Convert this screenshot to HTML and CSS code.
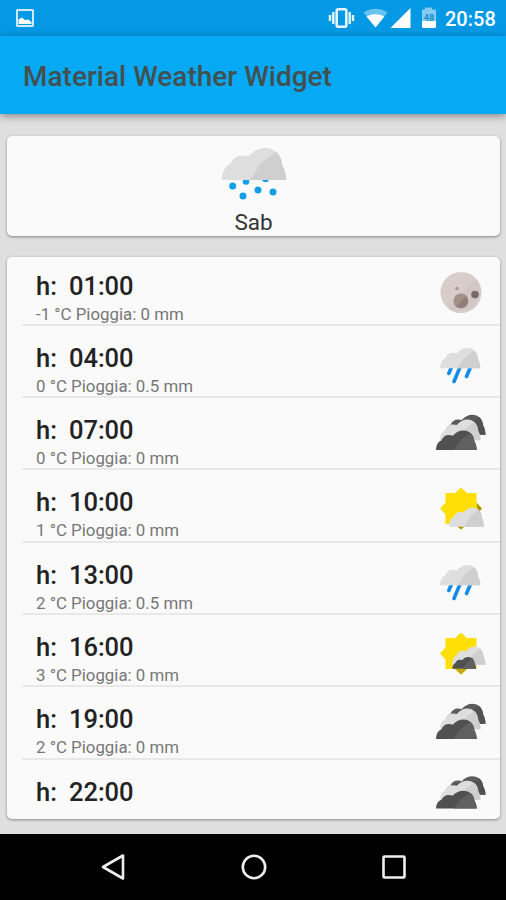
FILE: index.html
```html
<!DOCTYPE html>
<html lang="it">
<head>
<meta charset="utf-8">
<title>Material Weather Widget</title>
<link rel="stylesheet" href="styles.css">
</head>
<body>
<svg class="defs" aria-hidden="true">
  <defs>
    <path id="cloud" d="M0 32C0 24 3 18.500 8.500 16C11 10.500 15 7.500 20 7.500C22.500 7.500 24.500 7.800 26.500 8.500C31 3 37 0 43 0C53 0 59.500 7.500 60.500 18C62.500 21.500 64 26 64 32Z"/>
    <path id="shade" d="M54 3.500C58 7 60 12 60.500 18C62.500 21.500 64 26 64 32H27C31 29 33 24 37 18C42 11 49 8.500 54 3.500Z"/>
    <g id="lightcloud"><use href="#cloud" fill="#dedede"/><use href="#shade" fill="#cfcfcf"/></g>
    <g id="darkcloud"><use href="#cloud" fill="#505050"/><use href="#shade" fill="#606060"/></g>
    <g id="backcloud"><use href="#cloud" fill="#5c5c5c"/><use href="#shade" fill="#525252"/></g>
    <g id="rain">
      <g stroke="#138bea" stroke-width="3.600" stroke-linecap="round"><path d="M26 40L22.800 47.500M34.500 40L28 55.500M45 40L40.500 50.500"/></g>
      <use href="#lightcloud" transform="translate(14 22) scale(.63 .635)"/>
    </g>
    <g id="clouds">
      <use href="#backcloud" transform="translate(19 16.700) scale(.633 .63)"/>
      <use href="#lightcloud" transform="translate(14 21.500) scale(.633 .65)"/>
      <use href="#darkcloud" transform="translate(10 32.500) scale(.636 .61)"/>
    </g>
    <path id="sun" fill="#ffdf05" d="M19.500 23H29L35 17.500L41 23H50.500V32.500L56 38.500L50.500 44.500V54H41L35 59.500L29 54H19.500V44.500L14 38.500L19.500 32.500Z"/>
  </defs>
</svg>
<header class="statusbar">
  <svg class="picture" viewBox="0 0 18 18"><path fill="#fff" fill-opacity=".8" fill-rule="evenodd" d="M1.500 0H16.500Q18 0 18 1.500V16.500Q18 18 16.500 18H1.500Q0 18 0 16.500V1.500Q0 0 1.500 0ZM2 2V16H16V2Z"/><path fill="#fff" d="M2.500 15V10.500L6 8.500L9 11L12 10.500L15.500 13V15Z"/></svg>
  <svg class="indicators" viewBox="0 0 112 24">
    <g fill="none" stroke="#fff" stroke-opacity=".9"><rect x="8.700" y="3.200" width="9.600" height="17.600" rx="1.500" stroke-width="2.600"/><path stroke-width="2.400" d="M5.300 6V18M21.700 6V18M2 9V15M25 9V15"/></g>
    <path fill="#fff" fill-opacity=".4" d="M35.500 6.500Q47.500 -1 59.500 6.500L47.500 21Z"/><path fill="#fff" d="M38.500 10.500Q47.500 6 56.500 10.500L47.500 21.500Z"/>
    <path fill="#fff" d="M82.500 2V22H62.500Z"/>
    <path fill="#fff" fill-opacity=".5" d="M94 3.500H97V1.500H104V3.500H108V16H94Z"/><path fill="#fff" d="M94 15H108V20.500Q108 22 106.500 22H95.500Q94 22 94 20.500Z"/><text x="95.800" y="14.500" class="level">48</text>
  </svg>
  <span class="clock">20:58</span>
</header>
<div class="appbar"><h1>Material Weather Widget</h1></div>
<main>
  <section class="card day">
    <svg viewBox="0 0 64 52"><g fill="#129ee9"><circle cx="24" cy="33.500" r="3.300"/><circle cx="43.500" cy="31" r="3.300"/><circle cx="10.700" cy="38" r="3.500"/><circle cx="36" cy="42" r="3.500"/><circle cx="51" cy="44" r="3.500"/><circle cx="21" cy="48" r="3.500"/></g><use href="#lightcloud"/></svg>
    <span>Sab</span>
  </section>
  <section class="card hours">
    <div class="row"><div class="info"><b>h:<i></i>01:00</b><small>-1 °C Pioggia: 0 mm</small></div>
      <svg viewBox="0 0 74 72"><circle cx="35" cy="38.500" r="20.500" fill="#d8cdca"/><path fill="#d2c7c4" d="M50 24.500A20.500 20.500 0 0 1 21 53Z"/><circle cx="35" cy="47" r="7.300" fill="#8f7f79"/><path fill="#a29189" d="M29.500 42A7.300 7.300 0 0 1 40.500 42L30 52.500A7.300 7.300 0 0 1 29.500 42Z"/><circle cx="49" cy="40.500" r="3.800" fill="#776b69"/><circle cx="31" cy="34.500" r="1.800" fill="#aa9a94"/></svg></div>
    <div class="row"><div class="info"><b>h:<i></i>04:00</b><small>0 °C Pioggia: 0.5 mm</small></div><svg viewBox="0 0 74 72"><use href="#rain"/></svg></div>
    <div class="row"><div class="info"><b>h:<i></i>07:00</b><small>0 °C Pioggia: 0 mm</small></div><svg viewBox="0 0 74 72"><use href="#clouds"/></svg></div>
    <div class="row"><div class="info"><b>h:<i></i>10:00</b><small>1 °C Pioggia: 0 mm</small></div>
      <svg viewBox="0 0 74 72"><use href="#sun"/><path fill="#a99409" d="M50.500 33L56 38.500L52 42.500ZM31 56H39L35 59.500Z"/><use href="#lightcloud" transform="translate(23 37.500) scale(.547 .6)"/></svg></div>
    <div class="row"><div class="info"><b>h:<i></i>13:00</b><small>2 °C Pioggia: 0.5 mm</small></div><svg viewBox="0 0 74 72"><use href="#rain"/></svg></div>
    <div class="row"><div class="info"><b>h:<i></i>16:00</b><small>3 °C Pioggia: 0 mm</small></div>
      <svg viewBox="0 0 74 72"><use href="#sun"/><path fill="#c3a913" d="M29 54H41L35 59.500Z"/><use href="#lightcloud" transform="translate(26 31.500) scale(.523 .57)"/><use href="#darkcloud" transform="translate(26.300 42) scale(.37 .37)"/></svg></div>
    <div class="row"><div class="info"><b>h:<i></i>19:00</b><small>2 °C Pioggia: 0 mm</small></div><svg viewBox="0 0 74 72"><use href="#clouds"/></svg></div>
    <div class="row"><div class="info"><b>h:<i></i>22:00</b></div><svg viewBox="0 0 74 72"><use href="#clouds" transform="translate(0 1) scale(1 .915)"/></svg></div>
  </section>
</main>
<nav>
  <svg viewBox="0 0 28 28"><path d="M4 14L24 2.500V25.500Z"/></svg>
  <svg viewBox="0 0 28 28"><circle cx="14" cy="14" r="11.200"/></svg>
  <svg viewBox="0 0 28 28"><rect x="3.500" y="3.500" width="21" height="21" rx="1"/></svg>
</nav>
</body>
</html>
```
FILE: styles.css
```css
* { box-sizing: border-box; }
body {
  margin: 0;
  width: 506px;
  height: 900px;
  display: flex;
  flex-direction: column;
  overflow: hidden;
  background: #dfdfdf;
  font-family: Roboto, sans-serif;
}
.defs { width: 0; height: 0; flex: none; display: block; }
.statusbar {
  height: 36px;
  flex: none;
  display: flex;
  align-items: center;
  padding: 0 10px 0 16px;
  background: #0599e5;
  color: #fff;
}
.picture { width: 18px; height: 18px; }
.indicators { width: 112px; height: 24px; margin-left: auto; }
.level { font-size: 9px; font-weight: 700; fill: #168bca; }
.clock {
  margin-left: 5px;
  padding-top: 2px;
  width: 51px;
  font-size: 20px;
  font-weight: 500;
  white-space: nowrap;
}
.appbar {
  height: 78px;
  flex: none;
  display: flex;
  align-items: center;
  padding: 3px 23px 0;
  background: #05a9f4;
  box-shadow: 0 2px 8px rgba(0, 0, 0, .4);
}
h1 {
  margin: 0;
  font-size: 28px;
  font-weight: 500;
  white-space: nowrap;
  color: #44504f;
}
main {
  flex: 1;
  min-height: 0;
  padding: 22px 6px 0 7px;
}
.card {
  background: #fafafa;
  border-radius: 5px;
  box-shadow: 0 1px 3px rgba(0, 0, 0, .4);
}
.day {
  height: 100px;
  padding-top: 12px;
  display: flex;
  flex-direction: column;
  align-items: center;
}
.day svg { width: 64px; height: 52px; flex: none; }
.day span { margin-top: 8px; font-size: 22.500px; line-height: 28px; color: #333; }
.hours { height: 562px; margin-top: 21px; overflow: hidden; }
.row {
  height: 72.3px;
  display: flex;
  justify-content: space-between;
  margin-left: 15px;
  padding-left: 14px;
  border-bottom: 2px solid #e8e8e8;
}
.row:first-child { margin-top: -3.500px; }
.row:last-child { border-bottom: 0; }
.row svg { width: 74px; height: 72px; flex: none; }
.info { padding-top: 17px; white-space: nowrap; }
.info b {
  display: block;
  font-size: 25.500px;
  font-weight: 500;
  line-height: 30px;
  color: #222;
}
.info i { display: inline-block; width: 12px; }
.info small { display: block; font-size: 16.850px; line-height: 20px; margin-top: 3px; color: #777; }
nav {
  height: 66px;
  flex: none;
  display: flex;
  justify-content: space-between;
  align-items: center;
  padding: 0 98px 0 99px;
  background: #000;
}
nav svg { width: 28px; height: 28px; fill: none; stroke: #eee; stroke-width: 2.600; stroke-linejoin: round; }
```
